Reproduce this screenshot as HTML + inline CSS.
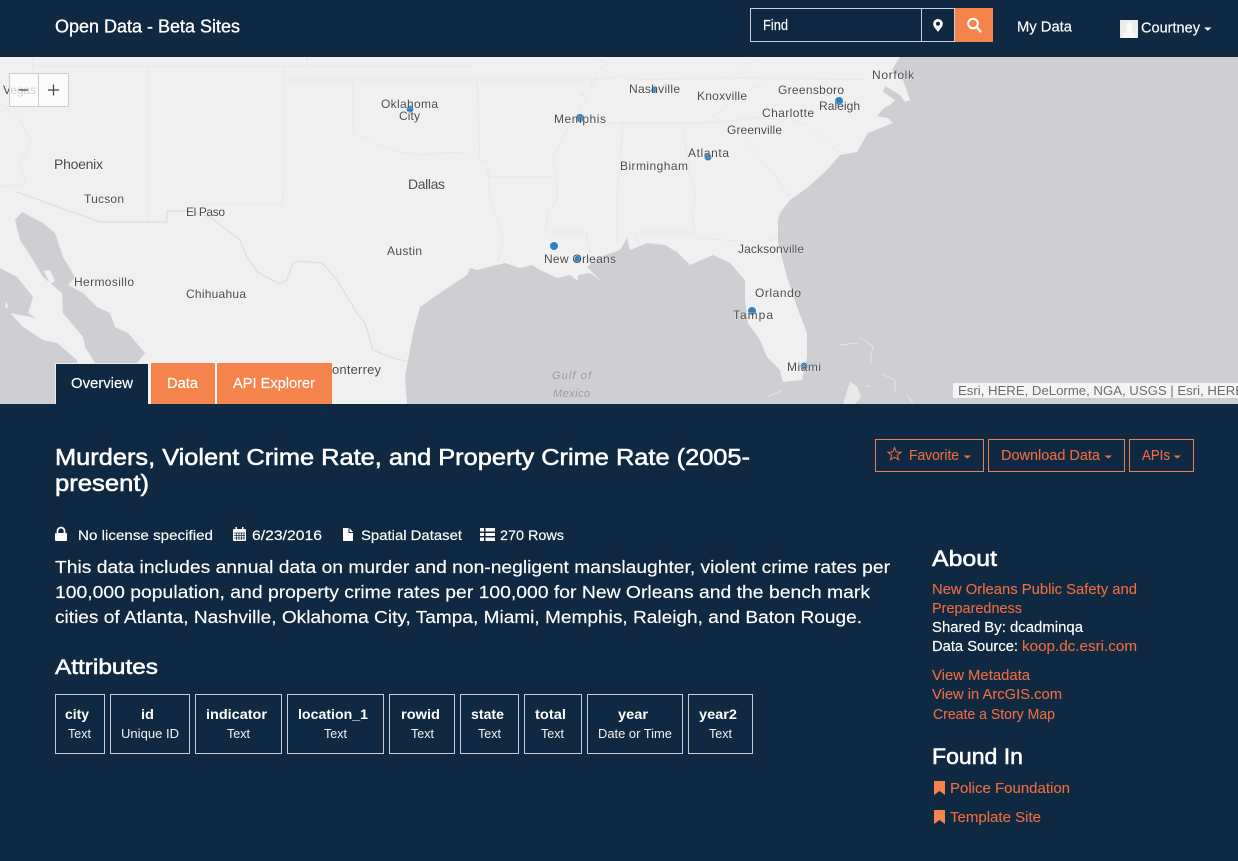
<!DOCTYPE html>
<html lang="en">
<head>
<meta charset="utf-8">
<title>Murders, Violent Crime Rate, and Property Crime Rate (2005-present)</title>
<style>
html,body{margin:0;padding:0;background:#0f2942;overflow:hidden}
svg{display:block}
text{font-family:"Liberation Sans",sans-serif;white-space:pre}
.m{font-size:12px;fill:#4b4b4b;paint-order:stroke;stroke:#fbfbfb;stroke-opacity:.55;stroke-width:1px;stroke-linejoin:round}
.ml{font-size:14px}
.b{fill:none;stroke:#e8e8e8;stroke-width:.9}
.k{fill:none;stroke:#d9d9d9;stroke-width:.9}
.w{fill:#fff}
.d{stroke:#fff;stroke-width:.15px}
.o{fill:#ee6c40;stroke:#ee6c40;stroke-width:.1px}
.h{fill:#fff;stroke:#fff;stroke-width:.55px}
.n{font-size:14px;font-weight:bold;fill:#fff}
.t{font-size:12.5px;fill:#f2f2f2}
.c{fill:none;stroke:#c9cdd2;stroke-width:1}
.l{font-size:14.5px}
.btn{fill:none;stroke:#e2824f;stroke-width:1}
</style>
</head>
<body>
<svg xmlns="http://www.w3.org/2000/svg" width="1238" height="861" viewBox="0 0 1238 861">
<rect width="1238" height="861" fill="#0f2942"/>

<!-- MAP -->
<rect x="0" y="57" width="1238" height="347" fill="#f0f0f0"/>
<path fill="#cfcfd3" d="M900 57L1238 57L1238 404L407 404L405 377L413 333L420 307L440 293L467 275L470 268L477 270L505 263L520 268L532 265L540 270L557 278L570 275L578 281L578 275L590 273L602 282L587 267L597 258L620 250L627 238L630 250L647 243L665 245L677 252L690 265L713 255L730 263L745 280L745 300L748 323L760 340L767 357L780 370L783 382L802 380L807 357L807 333L797 307L787 277L778 243L778 220L780 213L790 200L807 188L827 170L840 155L857 152L868 133L893 123L888 118L877 116L884 108L890 105L895 100L883 92L885 86L900 95L905 102L910 100L903 80L892 70L900 57Z"/>
<path fill="#cfcfd3" d="M15 220L22 212L43 223L55 233L63 257L75 277L68 285L83 293L97 307L110 313L115 327L128 333L145 353L137 363L145 375L145 404L95 404L95 363L85 347L83 337L63 313L62 293L43 277L33 260L20 240Z"/>
<path fill="#f0f0f0" d="M44 271L50 270L55 281L50 284Z"/>
<path fill="#cfcfd3" d="M0 268L17 277L33 297L28 313L36 318L10 313L23 327L43 340L57 343L77 360L80 404L0 404Z"/>
<path fill="#f0f0f0" d="M6 301L8 306L7 309L5 306Z"/>
<!-- islands -->
<g fill="none" stroke="#e6e6e8" stroke-width=".9" stroke-linecap="round">
<path d="M840 345L857 343M860 338L866 341L873 347L871 355L871 363M882 374L895 380L895 392M907 395L913 403M865 386L870 386M767 397L783 390"/>
</g>
<path fill="#e9e9ea" d="M843 404L850 382L857 386L861 397L855 404Z"/>

<!-- state borders -->
<g>
<path class="b" d="M33 57V73M33 66H475M147.500 66V222M307 57V66M285 66L284 80L283 204H202"/>
<path class="b" d="M284 80H353V134L370 140L385 147L400 152L420 155L440 153L462 152L480 160L488 162V177L490 200L499 225L503 240L498 262"/>
<path class="b" d="M477 80L480 160M353 80H592M488 177H555"/>
<path class="b" d="M592 57L607 63L600 70L593 80L590 90L580 95L587 97L577 115L567 130L560 143L553 160L557 180L557 200L548 213L545 232H587V243L590 253"/>
<path class="b" d="M592 80L625 76L627 80L723 78L770 78L870 80"/>
<path class="b" d="M572 123H710L712 117L737 100L768 78M710 123L740 120L753 117L780 120L790 118L807 125L840 153"/>
<path class="b" d="M742 137L773 173L790 197M623 123L617 200V245M682 123L690 177L697 200L692 213L695 233"/>
<path class="b" d="M635 232L637 240L640 243M635 232H693L697 238L763 243L770 240L777 238M733 77L750 63L763 57"/>
<path class="b" d="M0 103L20 120L32 142L20 163L25 182L22 185L0 187"/>
<path class="k" d="M17 192L100 222H167V211H187L210 217L240 240L247 257L257 272L280 284L287 280L293 263L300 261L322 263L337 280L357 313L365 323L373 350L390 357L413 363"/>
</g>

<!-- map dots -->
<g fill="#2e82c4">
<circle cx="410" cy="109" r="3.500"/>
<circle cx="654" cy="90" r="3"/>
<circle cx="580" cy="118" r="4"/>
<circle cx="839" cy="101" r="4"/>
<circle cx="708" cy="157" r="3.500"/>
<circle cx="554" cy="246" r="4"/>
<circle cx="578" cy="259" r="3.500"/>
<circle cx="752" cy="311" r="4"/>
<circle cx="804" cy="366" r="3.500"/>
</g>

<!-- map labels -->
<text class="m" x="3" y="94" textLength="33">Vegas</text>
<text class="m" x="381" y="108" textLength="57">Oklahoma</text>
<text class="m" x="399" y="120" textLength="21">City</text>
<text class="m ml" x="54" y="169" textLength="49">Phoenix</text>
<text class="m" x="84" y="203" textLength="40">Tucson</text>
<text class="m" x="186" y="216" textLength="39">El Paso</text>
<text class="m ml" x="408" y="189" textLength="37">Dallas</text>
<text class="m" x="629" y="93" textLength="51">Nashville</text>
<text class="m" x="697" y="100" textLength="50">Knoxville</text>
<text class="m" x="554" y="123" textLength="52">Memphis</text>
<text class="m" x="778" y="94" textLength="66">Greensboro</text>
<text class="m" x="762" y="117" textLength="52">Charlotte</text>
<text class="m" x="819" y="110" textLength="41">Raleigh</text>
<text class="m" x="872" y="79" textLength="42">Norfolk</text>
<text class="m" x="727" y="134" textLength="55">Greenville</text>
<text class="m" x="688" y="157" textLength="41">Atlanta</text>
<text class="m" x="620" y="170" textLength="68">Birmingham</text>
<text class="m" x="387" y="255" textLength="35">Austin</text>
<text class="m" x="74" y="286" textLength="60">Hermosillo</text>
<text class="m" x="186" y="298" textLength="60">Chihuahua</text>
<text class="m" x="544" y="263" textLength="72">New Orleans</text>
<text class="m" x="738" y="253" textLength="66">Jacksonville</text>
<text class="m" x="755" y="297" textLength="46">Orlando</text>
<text class="m" x="733" y="319" textLength="40">Tampa</text>
<text class="m" x="787" y="371" textLength="34">Miami</text>
<text class="m" x="321" y="374" style="font-size:13px" textLength="60">Monterrey</text>
<text x="552" y="379" font-size="11" font-style="italic" fill="#9c9ca0" textLength="39">Gulf of</text>
<text x="553" y="397" font-size="11" font-style="italic" fill="#9c9ca0" textLength="37">Mexico</text>

<!-- zoom control -->
<rect x="9.500" y="73.500" width="59" height="33" fill="#fff" fill-opacity=".72" stroke="#cdcdcd"/>
<path d="M38.500 74V106" stroke="#cdcdcd" fill="none"/>
<path d="M19 90H28M48 90H59M53.500 84.500V95.500" stroke="#444" stroke-width="1.200" fill="none"/>

<!-- attribution -->
<rect x="953" y="383" width="285" height="15" fill="#f4f4f4"/>
<text x="958" y="395" font-size="13" fill="#6c6c6c" textLength="286" lengthAdjust="spacingAndGlyphs">Esri, HERE, DeLorme, NGA, USGS | Esri, HERE</text>

<!-- tabs -->
<rect x="55" y="363" width="94" height="41" fill="#ececec"/>
<rect x="56" y="364" width="92" height="40" fill="#0f2942"/>
<rect x="148" y="363" width="69" height="41" fill="#f7f7f7"/>
<rect x="151" y="363" width="64" height="41" fill="#f4844c"/>
<rect x="217" y="363" width="115" height="41" fill="#f4844c"/>
<text class="w d" x="71" y="388" font-size="14.500" textLength="62" lengthAdjust="spacingAndGlyphs">Overview</text>
<text class="w d" x="167" y="388" font-size="14.500" textLength="31" lengthAdjust="spacingAndGlyphs">Data</text>
<text class="w d" x="233" y="388" font-size="14.500" textLength="82" lengthAdjust="spacingAndGlyphs">API Explorer</text>

<!-- HEADER -->
<rect x="0" y="0" width="1238" height="57" fill="#0f2942"/>
<text class="w" x="55" y="32.500" font-size="18.500" stroke="#fff" stroke-width=".3" textLength="185" lengthAdjust="spacingAndGlyphs">Open Data - Beta Sites</text>
<rect x="750.500" y="8.500" width="204" height="33" fill="none" stroke="#ccd0d4"/>
<path d="M921.500 9V41" stroke="#ccd0d4" fill="none"/>
<text class="w d" x="763" y="30" font-size="15" textLength="25" lengthAdjust="spacingAndGlyphs">Find</text>
<path fill="#fff" fill-rule="evenodd" d="M938 19a4.800 4.800 0 0 0-4.800 4.800c0 3 3.300 6 4.800 8.200c1.500-2.200 4.800-5.200 4.800-8.200A4.800 4.800 0 0 0 938 19zM938 21.800a2 2 0 1 1 0 4a2 2 0 0 1 0-4z"/>
<rect x="955" y="8" width="38" height="34" fill="#f4844c"/>
<circle cx="973" cy="23.500" r="4.800" fill="none" stroke="#fff" stroke-width="2"/>
<path d="M976.500 27L980.500 31.500" stroke="#fff" stroke-width="2.400" stroke-linecap="round" fill="none"/>
<text class="w d" x="1017" y="31.500" font-size="15" textLength="55" lengthAdjust="spacingAndGlyphs">My Data</text>
<rect x="1120" y="20" width="18" height="18" fill="#ececec"/>
<path fill="#f9f9f9" d="M1129 22a3.500 4.500 0 0 1 3.500 4.500c0 2-1 3.500-1.500 4.500c1 1.200 4 1.500 4.500 3.500V38h-13v-3.500c.5-2 3.500-2.300 4.500-3.500c-.5-1-1.500-2.500-1.500-4.500a3.500 4.500 0 0 1 3.500-4.500z"/>
<text class="w d" x="1141" y="32.500" font-size="15" textLength="59" lengthAdjust="spacingAndGlyphs">Courtney</text>
<path class="w" d="M1204 27.500H1211.500L1207.750 30.800Z"/>

<!-- TITLE -->
<text class="h" x="55" y="465" font-size="23.500" textLength="695" lengthAdjust="spacingAndGlyphs">Murders, Violent Crime Rate, and Property Crime Rate (2005-</text>
<text class="h" x="55" y="491" font-size="23.500" textLength="94" lengthAdjust="spacingAndGlyphs">present)</text>

<!-- action buttons -->
<rect class="btn" x="875.500" y="439.500" width="108" height="32"/>
<path fill="none" stroke="#ee7245" stroke-width="1" stroke-linejoin="miter" d="M894.500 447.500L896.300 452L901 452.300L897.300 455.200L898.600 459.800L894.500 457.200L890.400 459.800L891.700 455.200L888 452.300L892.700 452Z"/>
<text class="o" x="909" y="460" font-size="14.500" textLength="50" lengthAdjust="spacingAndGlyphs">Favorite</text>
<path fill="#ee7245" d="M963.500 455.500H971L967.250 458.500Z"/>
<rect class="btn" x="988.500" y="439.500" width="136" height="32"/>
<text class="o" x="1001" y="460" font-size="14.500" textLength="99" lengthAdjust="spacingAndGlyphs">Download Data</text>
<path fill="#ee7245" d="M1104.500 455.500H1112L1108.250 458.500Z"/>
<rect class="btn" x="1129.500" y="439.500" width="64" height="32"/>
<text class="o" x="1142" y="460" font-size="14.500" textLength="28" lengthAdjust="spacingAndGlyphs">APIs</text>
<path fill="#ee7245" d="M1173.500 455.500H1181L1177.250 458.500Z"/>

<!-- META -->
<rect class="w" x="55" y="533" width="12" height="8" rx="1"/>
<path d="M57.500 533.500V531a3.500 3.500 0 0 1 7 0v2.500" fill="none" stroke="#fff" stroke-width="1.700"/>
<text class="w d" x="78" y="540" font-size="14" textLength="135" lengthAdjust="spacingAndGlyphs">No license specified</text>
<rect class="w" x="233" y="529" width="13" height="12" rx="1"/>
<path class="w" d="M235.500 527h1.500v3h-1.500zM242 527h1.500v3H242z"/>
<path d="M234 533H245M234 535.500H245M234 538H245M236.500 533V540M239 533V540M241.500 533V540M244 533V540" stroke="#0f2942" stroke-width=".7" fill="none"/>
<text class="w d" x="252" y="540" font-size="14" textLength="70" lengthAdjust="spacingAndGlyphs">6/23/2016</text>
<path class="w" d="M343 528H348.500V533H353V541H343ZM349.500 528L353 532H349.500Z"/>
<text class="w d" x="361" y="540" font-size="14" textLength="101" lengthAdjust="spacingAndGlyphs">Spatial Dataset</text>
<path class="w" d="M480 528h4v3.500h-4zM485.500 528H495v3.500h-9.500zM480 533h4v3h-4zM485.500 533H495v3h-9.500zM480 537.500h4v3.500h-4zM485.500 537.500H495v3.500h-9.500z"/>
<text class="w d" x="500" y="540" font-size="14" textLength="64" lengthAdjust="spacingAndGlyphs">270 Rows</text>

<!-- DESCRIPTION -->
<text class="w d" x="55" y="573" font-size="17.500" textLength="835" lengthAdjust="spacingAndGlyphs">This data includes annual data on murder and non-negligent manslaughter, violent crime rates per</text>
<text class="w d" x="55" y="598" font-size="17.500" textLength="815" lengthAdjust="spacingAndGlyphs">100,000 population, and property crime rates per 100,000 for New Orleans and the bench mark</text>
<text class="w d" x="55" y="623" font-size="17.500" textLength="807" lengthAdjust="spacingAndGlyphs">cities of Atlanta, Nashville, Oklahoma City, Tampa, Miami, Memphis, Raleigh, and Baton Rouge.</text>

<!-- ATTRIBUTES -->
<text class="h" x="55" y="674" font-size="21.500" textLength="103" lengthAdjust="spacingAndGlyphs">Attributes</text>
<rect class="c" x="55.500" y="694.500" width="49" height="59"/>
<rect class="c" x="110.500" y="694.500" width="79" height="59"/>
<rect class="c" x="195.500" y="694.500" width="86" height="59"/>
<rect class="c" x="287.500" y="694.500" width="96" height="59"/>
<rect class="c" x="389.500" y="694.500" width="65" height="59"/>
<rect class="c" x="460.500" y="694.500" width="58" height="59"/>
<rect class="c" x="524.500" y="694.500" width="57" height="59"/>
<rect class="c" x="587.500" y="694.500" width="95" height="59"/>
<rect class="c" x="688.500" y="694.500" width="64" height="59"/>
<text class="n" x="65" y="719" textLength="24" lengthAdjust="spacingAndGlyphs">city</text>
<text class="n" x="141" y="719" textLength="13" lengthAdjust="spacingAndGlyphs">id</text>
<text class="n" x="206" y="719" textLength="61" lengthAdjust="spacingAndGlyphs">indicator</text>
<text class="n" x="298" y="719" textLength="70" lengthAdjust="spacingAndGlyphs">location_1</text>
<text class="n" x="401" y="719" textLength="39" lengthAdjust="spacingAndGlyphs">rowid</text>
<text class="n" x="471" y="719" textLength="33" lengthAdjust="spacingAndGlyphs">state</text>
<text class="n" x="535" y="719" textLength="31" lengthAdjust="spacingAndGlyphs">total</text>
<text class="n" x="618" y="719" textLength="30" lengthAdjust="spacingAndGlyphs">year</text>
<text class="n" x="699" y="719" textLength="38" lengthAdjust="spacingAndGlyphs">year2</text>
<text class="t" x="68" y="738" textLength="23" lengthAdjust="spacingAndGlyphs">Text</text>
<text class="t" x="121" y="738" textLength="58" lengthAdjust="spacingAndGlyphs">Unique ID</text>
<text class="t" x="227" y="738" textLength="23" lengthAdjust="spacingAndGlyphs">Text</text>
<text class="t" x="324" y="738" textLength="23" lengthAdjust="spacingAndGlyphs">Text</text>
<text class="t" x="411" y="738" textLength="23" lengthAdjust="spacingAndGlyphs">Text</text>
<text class="t" x="478" y="738" textLength="23" lengthAdjust="spacingAndGlyphs">Text</text>
<text class="t" x="541" y="738" textLength="23" lengthAdjust="spacingAndGlyphs">Text</text>
<text class="t" x="598" y="738" textLength="74" lengthAdjust="spacingAndGlyphs">Date or Time</text>
<text class="t" x="709" y="738" textLength="23" lengthAdjust="spacingAndGlyphs">Text</text>

<!-- ABOUT -->
<text class="h" x="932" y="566" font-size="22" textLength="65" lengthAdjust="spacingAndGlyphs">About</text>
<text class="o l" x="932" y="594" textLength="205" lengthAdjust="spacingAndGlyphs">New Orleans Public Safety and</text>
<text class="o l" x="932" y="613" textLength="90" lengthAdjust="spacingAndGlyphs">Preparedness</text>
<text class="w l d" x="932" y="632" textLength="151" lengthAdjust="spacingAndGlyphs">Shared By: dcadminqa</text>
<text class="w l d" x="932" y="651" textLength="86" lengthAdjust="spacingAndGlyphs">Data Source:</text>
<text class="o l" x="1022" y="651" textLength="115" lengthAdjust="spacingAndGlyphs">koop.dc.esri.com</text>
<text class="o l" x="932" y="680" textLength="98" lengthAdjust="spacingAndGlyphs">View Metadata</text>
<text class="o l" x="932" y="699" textLength="130" lengthAdjust="spacingAndGlyphs">View in ArcGIS.com</text>
<text class="o l" x="933" y="719" textLength="122" lengthAdjust="spacingAndGlyphs">Create a Story Map</text>

<!-- FOUND IN -->
<text class="h" x="932" y="764" font-size="22" textLength="91" lengthAdjust="spacingAndGlyphs">Found In</text>
<path fill="#f4844c" d="M934 781H945V795L939.500 791L934 795Z"/>
<text class="o l" x="950" y="793" textLength="120" lengthAdjust="spacingAndGlyphs">Police Foundation</text>
<path fill="#f4844c" d="M934 810H945V824L939.500 820L934 824Z"/>
<text class="o l" x="950" y="822" textLength="91" lengthAdjust="spacingAndGlyphs">Template Site</text>
</svg>
</body>
</html>
